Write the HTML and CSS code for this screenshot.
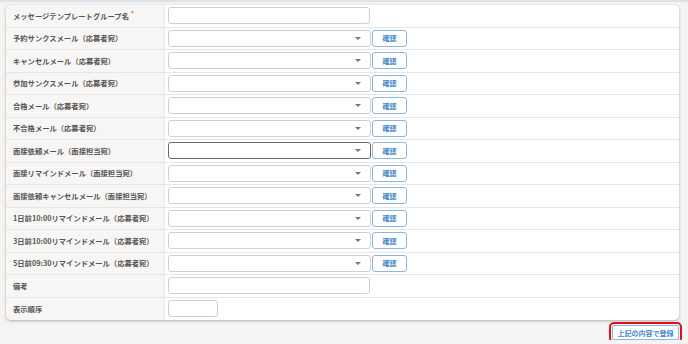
FILE: index.html
```html
<!DOCTYPE html>
<html lang="ja">
<head>
  <meta charset="UTF-8">
  <title>メールテンプレートグループ</title>
  <link rel="stylesheet" href="styles.css">
</head>
<body>
  <div class="topline"></div>
  <div class="card">
    <div class="row">
      <div class="label">メッセージテンプレートグループ名<span class="req">*</span></div>
      <div class="field"><input type="text" class="text"></div>
    </div>
    <div class="row">
      <div class="label">予約サンクスメール（応募者宛）</div>
      <div class="field"><div class="select"><span class="caret"></span></div><button class="check">確認</button></div>
    </div>
    <div class="row">
      <div class="label">キャンセルメール（応募者宛）</div>
      <div class="field"><div class="select"><span class="caret"></span></div><button class="check">確認</button></div>
    </div>
    <div class="row">
      <div class="label">参加サンクスメール（応募者宛）</div>
      <div class="field"><div class="select"><span class="caret"></span></div><button class="check">確認</button></div>
    </div>
    <div class="row">
      <div class="label">合格メール（応募者宛）</div>
      <div class="field"><div class="select"><span class="caret"></span></div><button class="check">確認</button></div>
    </div>
    <div class="row">
      <div class="label">不合格メール（応募者宛）</div>
      <div class="field"><div class="select"><span class="caret"></span></div><button class="check">確認</button></div>
    </div>
    <div class="row">
      <div class="label">面接依頼メール（面接担当宛）</div>
      <div class="field"><div class="select focus"><span class="caret"></span></div><button class="check">確認</button></div>
    </div>
    <div class="row">
      <div class="label">面接リマインドメール（面接担当宛）</div>
      <div class="field"><div class="select"><span class="caret"></span></div><button class="check">確認</button></div>
    </div>
    <div class="row">
      <div class="label">面接依頼キャンセルメール（面接担当宛）</div>
      <div class="field"><div class="select"><span class="caret"></span></div><button class="check">確認</button></div>
    </div>
    <div class="row">
      <div class="label">1日前10:00リマインドメール（応募者宛）</div>
      <div class="field"><div class="select"><span class="caret"></span></div><button class="check">確認</button></div>
    </div>
    <div class="row">
      <div class="label">3日前10:00リマインドメール（応募者宛）</div>
      <div class="field"><div class="select"><span class="caret"></span></div><button class="check">確認</button></div>
    </div>
    <div class="row">
      <div class="label">5日前09:30リマインドメール（応募者宛）</div>
      <div class="field"><div class="select"><span class="caret"></span></div><button class="check">確認</button></div>
    </div>
    <div class="row">
      <div class="label">備考</div>
      <div class="field"><input type="text" class="text"></div>
    </div>
    <div class="row last">
      <div class="label">表示順序</div>
      <div class="field"><input type="text" class="text short"></div>
    </div>
  </div>
  <div class="footer">
    <button class="submit">上記の内容で登録</button>
  </div>
</body>
</html>
```
FILE: styles.css
```css
body{
  margin: 0;
  background: #f4f4f3;
  font-family: "Noto Sans CJK JP", "Noto Sans", sans-serif;
  color: #555;
}
.topline{
  height: 2px;
  background: #dde1ea;
}
.card{
  margin: 3px 9px 0 6px;
  background: #fff;
  border-radius: 5px;
  box-shadow: 0 1px 3px rgba(0, 0, 0, 0.3);
  overflow: hidden;
}
.row{
  display: flex;
  height: 22.5px;
  border-bottom: 1px solid #e6e6e6;
  box-sizing: border-box;
}
.row.last{
  border-bottom: none;
}
.label{
  width: 159px;
  flex-shrink: 0;
  background: #f7f6f5;
  border-right: 1px solid #e8e8e8;
  display: flex;
  align-items: center;
  padding-left: 7px;
  box-sizing: border-box;
  font-size: 7.3px;
  font-weight: bold;
  color: #555;
}
.req{
  color: #e05050;
  margin-left: 2px;
  font-size: 6px;
  position: relative;
  top: -2px;
}
.field{
  display: flex;
  align-items: center;
  gap: 1px;
  padding-left: 3px;
}
.text{
  width: 202px;
  height: 17px;
  box-sizing: border-box;
  border: 1px solid #cfcfcf;
  border-radius: 3px;
  margin: 0;
  padding: 0;
}
.text.short{
  width: 50px;
}
.select{
  width: 203px;
  height: 17px;
  box-sizing: border-box;
  border: 1px solid #cfcfcf;
  border-radius: 3px;
  display: flex;
  align-items: center;
  justify-content: flex-end;
  padding-right: 9px;
}
.select.focus{
  border-color: #6a6a6a;
}
.caret{
  width: 0;
  height: 0;
  border-left: 3px solid transparent;
  border-right: 3px solid transparent;
  border-top: 3px solid #777;
}
.check{
  width: 35px;
  height: 17px;
  margin: 0;
  padding: 0;
  background: #fff;
  border: 1px solid #8ab8e0;
  border-radius: 3px;
  color: #3f87c8;
  font-family: "Noto Sans CJK JP", sans-serif;
  font-size: 7px;
  font-weight: bold;
}
.footer{
  display: flex;
  justify-content: flex-end;
  padding: 5px 9px 0 0;
}
.submit{
  width: 67px;
  height: 15px;
  margin: 0;
  padding: 0;
  background: #fff;
  border: 1px solid #8ab8e0;
  border-radius: 2px;
  color: #3f87c8;
  font-family: "Noto Sans CJK JP", sans-serif;
  font-size: 7px;
  font-weight: bold;
  outline: 2px solid #e0101a;
  outline-offset: 1px;
}
```
